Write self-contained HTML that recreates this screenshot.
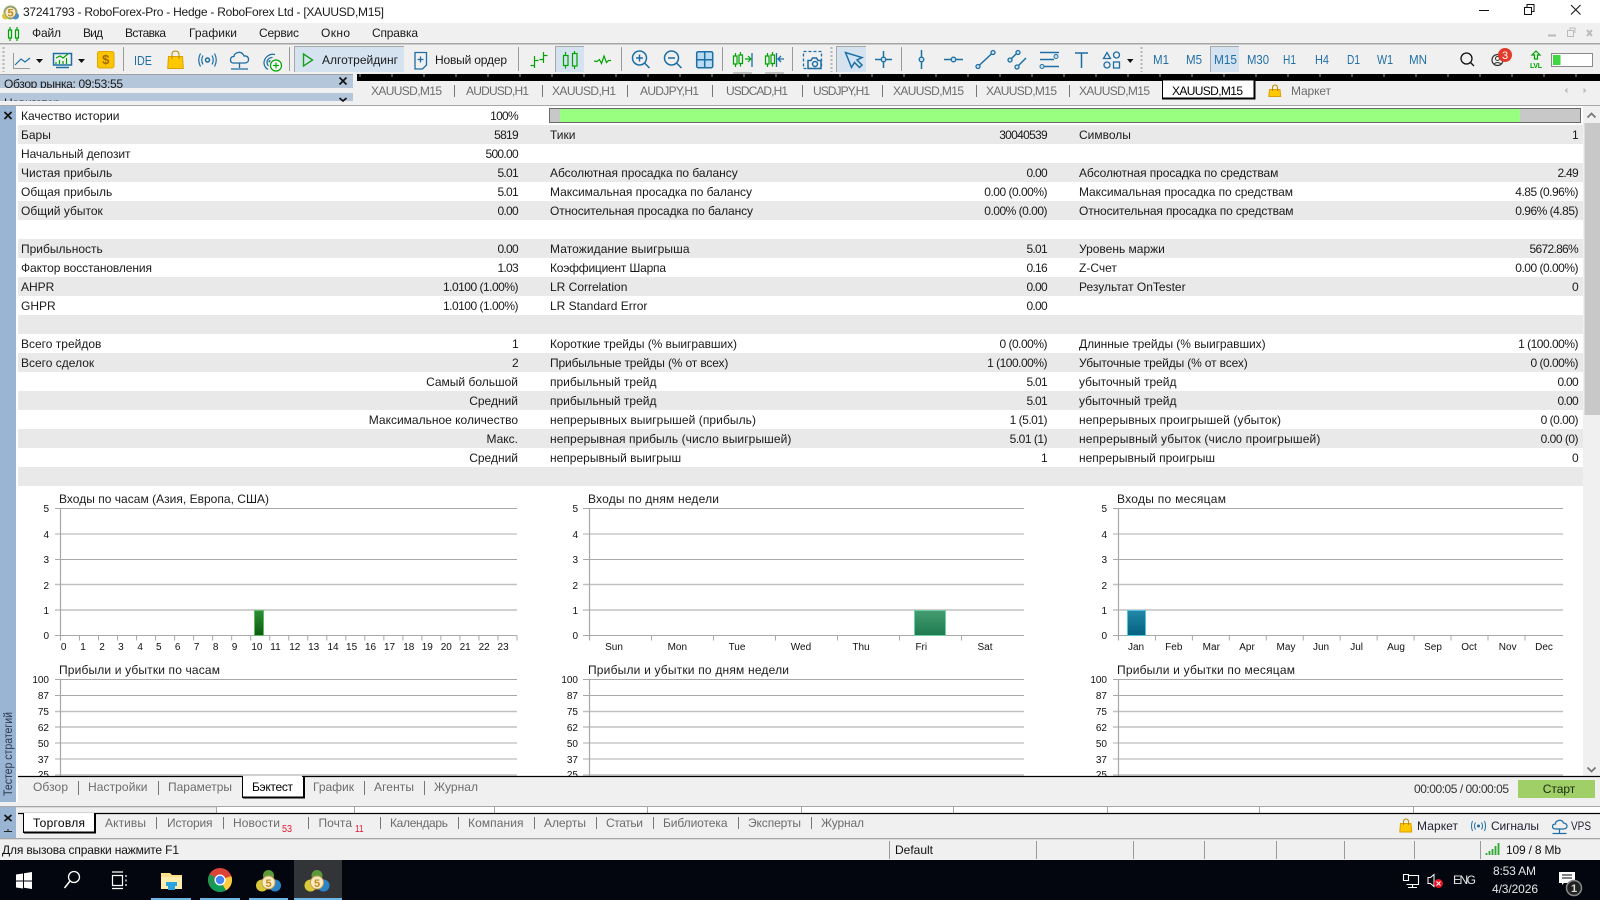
<!DOCTYPE html>
<html lang="ru"><head><meta charset="utf-8"><title>RoboForex</title>
<style>
html,body{margin:0;padding:0;width:1600px;height:900px;overflow:hidden;background:#f0f0f0}
svg{display:block;position:absolute;left:0;top:0}
text{font-family:"Liberation Sans","Noto Sans CJK SC",sans-serif;font-size:12px;fill:#1a1a1a}
.g text{fill:#6c6c6c}
.r text,text.r{text-anchor:end}
.v text{letter-spacing:-.7px}
.v text.p{letter-spacing:-.5px}
.b text{fill:#1f6fa8;font-size:13px}
.a text{font-size:10px;fill:#111}
.m text{text-anchor:middle}
.w text{fill:#e8e8e8}
.i{fill:none;stroke:#1c6ea4;stroke-width:1.5}
.n{fill:none;stroke:#00a400;stroke-width:1.2}
</style></head><body>
<svg width="1600" height="900" viewBox="0 0 1600 900" xmlns="http://www.w3.org/2000/svg">
<!-- backgrounds -->
<rect width="1600" height="23" fill="#fff"/>
<rect y="23" width="1600" height="837" fill="#f0f0f0"/>
<!-- title -->
<circle cx="10.5" cy="12.5" r="7" fill="#8fae6a"/>
<circle cx="5.5" cy="16" r="3.500" fill="#d8c83a"/><circle cx="15.500" cy="16" r="3.500" fill="#4a90c8"/>
<circle cx="10.5" cy="12.5" r="5.500" fill="#f6eccb" stroke="#8a8a60" stroke-width=".7"/>
<text x="10.5" y="16.500" text-anchor="middle" style="font-size:11px;fill:#c8891a;font-weight:bold">5</text>
<text x="23" y="16" textLength="361">37241793 - RoboForex-Pro - Hedge - RoboForex Ltd - [XAUUSD,M15]</text>
<path d="M1479 10.5H1489" stroke="#111" fill="none"/>
<path d="M1524.5 7.5h7v7h-7zM1527 7V4.500h7v7h-2.500" stroke="#111" fill="none"/>
<path d="M1571 5l9.500 9.500M1580.500 5l-9.500 9.500" stroke="#111" fill="none"/>
<!-- menu -->
<path class="n" d="M10 27v3M8.500 30h3v8h-3zM10 38v3M17 27v3M15.500 30h3v8h-3zM17 38v3"/>
<g>
<text x="32" y="37" textLength="29">Файл</text>
<text x="83" y="37" textLength="20">Вид</text>
<text x="125" y="37" textLength="41">Вставка</text>
<text x="189" y="37" textLength="48">Графики</text>
<text x="259" y="37" textLength="40">Сервис</text>
<text x="321" y="37" textLength="29">Окно</text>
<text x="372" y="37" textLength="46">Справка</text>
</g>
<path d="M1548 35.500h8" stroke="#bbb" stroke-width="2"/>
<path d="M1567.500 30.500h6v6h-6zM1570 30v-2h5v5" stroke="#bbb" fill="none"/>
<path d="M1587 30l5 6M1592 30l-5 6" stroke="#bbb" stroke-width="2"/>
<!-- toolbar -->
<rect y="43" width="1600" height="1.500" fill="#a6a6a6"/>
<path d="M3.500 47V72M831.500 47V72M1141.500 47V72" stroke="#b5b5b5" stroke-dasharray="2 2" stroke-width="2" fill="none"/>
<path d="M123.500 47V71M289.500 47V71M518.500 47V71M621.500 47V71M722.500 47V71M792.500 47V71M901.500 47V71" stroke="#9a9a9a" fill="none"/>
<!-- highlighted buttons -->
<g fill="#d5e3f1"><rect x="294" y="46" width="110" height="26"/><rect x="555" y="46" width="29" height="26"/><rect x="836" y="46" width="30" height="26"/><rect x="1210" y="46" width="29" height="26"/></g>
<path d="M294.500 72V46.500H404M555.500 72V46.500H584M836.500 72V46.500H866M1210.500 72V46.500H1239" stroke="#a8a8a8" fill="none"/>
<!-- line chart -->
<path d="M13.500 53V68.500H30" stroke="#999" fill="none"/>
<path class="i" style="stroke-width:1.200" d="M15 65l6-6 4 3 5-4"/>
<path d="M36 59h7l-3.500 4zM78 59h7l-3.500 4zM1127 59h6.500l-3.250 4z" fill="#111"/>
<!-- monitor -->
<path class="i" d="M53.500 53.500h18v11.500h-18zM56 67.500h13"/>
<path class="n" d="M56 62v2M59.500 60v4M63 61v3M66.500 58v6M56 58l4-2 3 2 5-4"/>
<!-- dollar -->
<rect x="97.500" y="51.500" width="16.500" height="16.500" rx="2" fill="#fdc400" stroke="#e0a800"/>
<text x="105.700" y="64" text-anchor="middle" style="font-size:13px;fill:#a06a00;font-weight:bold">$</text>
<!-- IDE -->
<text x="134" y="65" style="font-size:13px;fill:#1f6fa8" textLength="18" lengthAdjust="spacingAndGlyphs">IDE</text>
<!-- bag -->
<path d="M168.500 56.500h14l.8 12h-15.600z" fill="#ffc800" stroke="#d8a000"/>
<path d="M172 59v-4.500q0-3.500 3.500-3.500t3.500 3.500V59" fill="none" stroke="#b88a00"/>
<!-- signals -->
<circle cx="207.500" cy="60" r="2" fill="none" stroke="#1c6ea4" stroke-width="1.500"/>
<path class="i" style="stroke-width:1.200" d="M203 55.500q-2.500 4.500 0 9M212 55.500q2.500 4.500 0 9M200.500 53.500q-3.500 6.500 0 13M214.500 53.500q3.500 6.500 0 13"/>
<!-- cloud -->
<path class="i" style="stroke-width:1.300" d="M235 63h10q4-.5 3.500-4t-4.500-3q-2-4.500-6-3.500t-4 4q-3.500 0-3.500 3.500t4.500 3zM239.500 63v5M231 69h17"/>
<!-- globe plus -->
<path class="i" style="stroke-width:1.200" d="M275 54.500a9 9 0 0 0-11 9q.500 4 4 6M272.500 57.500a5 5 0 0 0-5.500 5q0 2 1.500 3.500M270.500 60.500a2 2 0 0 0-1.500 2"/>
<circle cx="276" cy="65.500" r="5.500" fill="#fff" stroke="#00a400" stroke-width="1.200"/>
<path d="M276 62.500v6M273 65.500h6" stroke="#00a400" stroke-width="1.200"/>
<!-- algo -->
<path d="M303.500 54l9 6-9 6z" fill="none" stroke="#18a018" stroke-width="1.400"/>
<text x="322" y="64" textLength="76">Алготрейдинг</text>
<!-- new order -->
<path class="i" style="stroke-width:1.300" d="M415 52.500h11.500v12.500l-4 4H415zM420.500 56.500v6M417.500 59.500h6"/>
<text x="435" y="64" textLength="72">Новый ордер</text>
<path class="n" d="M534.500 56v12M530.500 65.500h4M534.500 60.500h4M543.500 52v11M539.500 59.500h4M543.500 55.500h4"/>
<path class="n" d="M565.500 52v3M563.500 55.500h4.500v10h-4.500zM565.500 65.500v3M574.500 51v2.500M572.500 53.500h4.500v12.500h-4.500zM574.500 66v3"/>
<path class="n" d="M594 61l3 .5 2.500-2 2 4 2.500-7.500 2.500 6.500 2-2h2.500"/>
<!-- zoom -->
<circle cx="639.500" cy="58" r="7" class="i"/><path class="i" d="M644.500 63l5 5M636 58h7M639.500 54.500v7"/>
<circle cx="671.500" cy="58" r="7" class="i"/><path class="i" d="M676.500 63l5 5M668 58h7"/>
<!-- grid -->
<rect x="696.700" y="51.700" width="16" height="16" rx="1.500" fill="#b8dcf5" stroke="#1c6ea4" stroke-width="1.500"/>
<path class="i" d="M704.700 52v16M697 59.700h16"/>
<!-- shift -->
<path class="n" d="M735.500 53v3M733.500 56h3.500v8h-3.500zM735.500 64v3M740.500 52v3M739 55h3.500v8.500H739zM740.500 63.500v3M745 59h6M748 56l3 3-3 3"/>
<path class="i" style="stroke-width:1.300" d="M752 53v14"/>
<path d="M733 73h19M765 73h19" stroke="#999"/>
<path class="n" d="M767.500 53v3M765.500 56h3.500v8h-3.500zM767.500 64v3M772.500 52v3M771 55h3.500v8.500H771zM772.500 63.500v3"/>
<path class="i" style="stroke-width:1.300" d="M776.500 53v14M778 59h6M781 56l-3 3 3 3"/>
<!-- camera -->
<path d="M803.500 51.500h18v17h-18z" fill="none" stroke="#1c6ea4" stroke-width="1.300" stroke-dasharray="3 2"/>
<path class="i" d="M808 60.500h3l1.500-2.500h4l1.500 2.500h3v8h-13z"/><circle cx="815" cy="64" r="2.500" class="i"/>
<!-- cursor -->
<path d="M845.500 52.500l6 15 3-5 5 5 2.500-2.500-5-5 5-2.500z" fill="#cfe4f5" stroke="#1c6ea4" stroke-width="1.500"/>
<!-- tools -->
<path class="i" d="M875 59.500h17M883.500 51v17"/><circle cx="883.500" cy="59.500" r="2.300" fill="#cfe4f5" stroke="#1c6ea4" stroke-width="1.300"/>
<path class="i" d="M921.500 50v19"/><circle cx="921.500" cy="59.500" r="2.300" fill="#cfe4f5" stroke="#1c6ea4" stroke-width="1.300"/>
<path class="i" d="M944 59.500h19"/><circle cx="953.500" cy="59.500" r="2.300" fill="#cfe4f5" stroke="#1c6ea4" stroke-width="1.300"/>
<path class="i" d="M978 66.500L993 52.500"/><circle cx="978" cy="66.500" r="2" fill="#cfe4f5" stroke="#1c6ea4" stroke-width="1.300"/><circle cx="993" cy="52.500" r="2" fill="#cfe4f5" stroke="#1c6ea4" stroke-width="1.300"/>
<path class="i" d="M1009 61l9-9M1017 67l9-9"/><circle cx="1010" cy="60" r="2" fill="#cfe4f5" stroke="#1c6ea4" stroke-width="1.300"/><circle cx="1018" cy="52.500" r="2" fill="#cfe4f5" stroke="#1c6ea4" stroke-width="1.300"/><circle cx="1017" cy="67" r="2" fill="#cfe4f5" stroke="#1c6ea4" stroke-width="1.300"/>
<path class="i" d="M1040 52.500h19M1040 59.500h14M1040 66.500h19"/><circle cx="1056" cy="56.500" r="2" fill="#cfe4f5" stroke="#1c6ea4"/><circle cx="1042" cy="66.500" r="2" fill="#cfe4f5" stroke="#1c6ea4"/>
<path class="i" d="M1075 53h13M1081.500 53v15"/>
<path class="i" d="M1103.500 58.500l3.500-6 3.500 6z" style="stroke-width:1.300"/>
<circle cx="1116.500" cy="55" r="3" class="i" style="stroke-width:1.300"/><circle cx="1107" cy="65" r="3" class="i" style="stroke-width:1.300"/><rect x="1113.500" y="62" width="6" height="6" class="i" style="stroke-width:1.300"/>
<!-- periods -->
<g class="b">
<text x="1153" y="64" textLength="16" lengthAdjust="spacingAndGlyphs">M1</text>
<text x="1186" y="64" textLength="16" lengthAdjust="spacingAndGlyphs">M5</text>
<text x="1214" y="64" textLength="23" lengthAdjust="spacingAndGlyphs">M15</text>
<text x="1247" y="64" textLength="22" lengthAdjust="spacingAndGlyphs">M30</text>
<text x="1283" y="64" textLength="13" lengthAdjust="spacingAndGlyphs">H1</text>
<text x="1315" y="64" textLength="14" lengthAdjust="spacingAndGlyphs">H4</text>
<text x="1347" y="64" textLength="13" lengthAdjust="spacingAndGlyphs">D1</text>
<text x="1377" y="64" textLength="16" lengthAdjust="spacingAndGlyphs">W1</text>
<text x="1409" y="64" textLength="18" lengthAdjust="spacingAndGlyphs">MN</text>
</g>
<circle cx="1466.500" cy="58.500" r="5.500" fill="none" stroke="#111" stroke-width="1.300"/><path d="M1470.500 62.500l3.500 3.500" stroke="#111" stroke-width="1.300"/>
<circle cx="1497.500" cy="60" r="5.500" fill="none" stroke="#333" stroke-width="1.200"/><circle cx="1497.500" cy="58.500" r="2" fill="none" stroke="#333"/><path d="M1494 64q3.500-3 7 0" fill="none" stroke="#333"/>
<circle cx="1505" cy="55" r="7" fill="#e23a2a"/>
<text x="1505" y="59" text-anchor="middle" style="font-size:11px;fill:#fff">3</text>
<path d="M1536 51l4 4h-2.500v4h-3v-4H1532z" fill="none" stroke="#00a400" stroke-width="1.200"/>
<text x="1530" y="68" textLength="12" style="font-size:7px;fill:#00a400;font-weight:bold">LVL</text>
<rect x="1551.500" y="53.500" width="41" height="13" fill="#fff" stroke="#8a8a8a"/>
<rect x="1553" y="55" width="7.500" height="10" fill="#3fd83f"/>
<!-- black strip and left panel -->
<rect x="357" y="74" width="1243" height="7" fill="#000"/>
<path d="M359.500 75.500H1600" stroke="#999" stroke-width="3" stroke-dasharray="1 31"/>
<rect y="74" width="353" height="1" fill="#a0a0a0"/>
<rect y="75" width="353" height="13" fill="#b4c6da"/>
<text x="4" y="88" textLength="119">Обзор рынка: 09:53:55</text>
<rect y="88" width="353" height="5" fill="#f0f0f0"/>
<rect y="93" width="353" height="9" fill="#b4c6da"/>
<text x="4" y="107" textLength="56">Навигатор</text>
<rect y="101" width="353" height="4" fill="#f0f0f0"/>
<path d="M339.500 77.500l7 7M346.500 77.500l-7 7" stroke="#111" stroke-width="1.700"/>
<path d="M339.500 98l3.500 3 3.500-3" stroke="#111" stroke-width="1.700" fill="none"/>
<!-- chart tabs -->
<g class="g" style="font-size:12px">
<text x="371" y="95" textLength="71">XAUUSD,M15</text>
<text x="466" y="95" textLength="63">AUDUSD,H1</text>
<text x="552" y="95" textLength="64">XAUUSD,H1</text>
<text x="640" y="95" textLength="59">AUDJPY,H1</text>
<text x="726" y="95" textLength="62">USDCAD,H1</text>
<text x="813" y="95" textLength="57">USDJPY,H1</text>
<text x="893" y="95" textLength="71">XAUUSD,M15</text>
<text x="986" y="95" textLength="71">XAUUSD,M15</text>
<text x="1079" y="95" textLength="71">XAUUSD,M15</text>
<text x="1291" y="95" textLength="40">Маркет</text>
</g>
<path d="M454.500 85V97M542.500 85V97M627.500 85V97M712.500 85V97M802.500 85V97M882.500 85V97M976.500 85V97M1069.500 85V97" stroke="#777" fill="none"/>
<rect x="1162.500" y="80" width="91.500" height="18" fill="#fff" stroke="#000"/>
<path d="M1162 98.500H1254.500V80" stroke="#000" fill="none" stroke-width="2"/>
<text x="1172" y="95" textLength="71" style="fill:#000">XAUUSD,M15</text>
<path d="M1269.500 89.500h10.500l.7 7h-11.900z" fill="#ffc800" stroke="#d8a000"/>
<path d="M1272.500 91v-3q0-3 2.500-3t2.500 3v3" fill="none" stroke="#b88a00"/>
<path d="M1567.500 87.500v6l-3-3zM1583.500 87.500v6l3-3z" fill="#c0c0c0"/>
<rect y="105" width="1600" height="1.300" fill="#a6a6a6"/>
<!-- tester strip -->
<rect x="0" y="106" width="18" height="696" fill="#fff"/>
<rect x="0" y="106" width="16" height="696" fill="#9ab5d4"/>
<path d="M4.500 112l7 7M11.500 112l-7 7" stroke="#111" stroke-width="1.700"/>
<text transform="translate(12,796) rotate(-90)" textLength="84" lengthAdjust="spacingAndGlyphs" style="fill:#2a3a4a">Тестер стратегий</text>
<!-- content -->
<rect x="18" y="106" width="1565" height="671" fill="#fff"/>
<g fill="#e9e9e9">
<rect x="18" y="125" width="1565" height="19"/><rect x="18" y="163" width="1565" height="19"/><rect x="18" y="201" width="1565" height="19"/><rect x="18" y="239" width="1565" height="19"/><rect x="18" y="277" width="1565" height="19"/><rect x="18" y="315" width="1565" height="19"/><rect x="18" y="353" width="1565" height="19"/><rect x="18" y="391" width="1565" height="19"/><rect x="18" y="429" width="1565" height="19"/><rect x="18" y="467" width="1565" height="19"/>
</g>
<!-- scrollbar -->
<rect x="1583" y="106" width="17" height="671" fill="#f0f0f0"/>
<rect x="1584.500" y="123" width="15.500" height="292" fill="#c8c8c8"/>
<path d="M1587.500 117.500l4-4 4 4M1587.500 767.500l4 4 4-4" fill="none" stroke="#777" stroke-width="1.800"/>
<!-- progress -->
<rect x="549.500" y="108.500" width="1031" height="14" fill="#c8c8c8" stroke="#6a6a6a"/>
<rect x="560" y="109" width="960" height="13" fill="#99ff80"/>
<!-- col 1 -->
<g>
<text x="21" y="120" textLength="98.500">Качество истории</text>
<text x="21" y="139">Бары</text>
<text x="21" y="158" textLength="109.500">Начальный депозит</text>
<text x="21" y="177">Чистая прибыль</text>
<text x="21" y="196">Общая прибыль</text>
<text x="21" y="215">Общий убыток</text>
<text x="21" y="253">Прибыльность</text>
<text x="21" y="272" textLength="131">Фактор восстановления</text>
<text x="21" y="291">AHPR</text>
<text x="21" y="310">GHPR</text>
<text x="21" y="348">Всего трейдов</text>
<text x="21" y="367">Всего сделок</text>
</g>
<g class="r v">
<text x="518" y="120">100%</text>
<text x="518" y="139">5819</text>
<text x="518" y="158">500.00</text>
<text x="518" y="177">5.01</text>
<text x="518" y="196">5.01</text>
<text x="518" y="215">0.00</text>
<text x="518" y="253">0.00</text>
<text x="518" y="272">1.03</text>
<text class="p" x="518" y="291">1.0100 (1.00%)</text>
<text class="p" x="518" y="310">1.0100 (1.00%)</text>
<text x="518" y="348">1</text>
<text x="518" y="367">2</text>
</g>
<g class="r">
<text x="518" y="386">Самый большой</text>
<text x="518" y="405">Средний</text>
<text x="518" y="424">Максимальное количество</text>
<text x="518" y="443">Макс.</text>
<text x="518" y="462">Средний</text>
</g>
<!-- col 2 -->
<g>
<text x="550" y="139">Тики</text>
<text x="550" y="177" textLength="187.700">Абсолютная просадка по балансу</text>
<text x="550" y="196" textLength="202">Максимальная просадка по балансу</text>
<text x="550" y="215" textLength="203">Относительная просадка по балансу</text>
<text x="550" y="253" textLength="139.500">Матожидание выигрыша</text>
<text x="550" y="272" textLength="116">Коэффициент Шарпа</text>
<text x="550" y="291">LR Correlation</text>
<text x="550" y="310">LR Standard Error</text>
<text x="550" y="348" textLength="187">Короткие трейды (% выигравших)</text>
<text x="550" y="367" textLength="178.400">Прибыльные трейды (% от всех)</text>
<text x="550" y="386">прибыльный трейд</text>
<text x="550" y="405">прибыльный трейд</text>
<text x="550" y="424" textLength="206">непрерывных выигрышей (прибыль)</text>
<text x="550" y="443" textLength="241.400">непрерывная прибыль (число выигрышей)</text>
<text x="550" y="462">непрерывный выигрыш</text>
</g>
<g class="r v">
<text x="1047" y="139">30040539</text>
<text x="1047" y="177">0.00</text>
<text class="p" x="1047" y="196">0.00 (0.00%)</text>
<text class="p" x="1047" y="215">0.00% (0.00)</text>
<text x="1047" y="253">5.01</text>
<text x="1047" y="272">0.16</text>
<text x="1047" y="291">0.00</text>
<text x="1047" y="310">0.00</text>
<text class="p" x="1047" y="348">0 (0.00%)</text>
<text class="p" x="1047" y="367">1 (100.00%)</text>
<text x="1047" y="386">5.01</text>
<text x="1047" y="405">5.01</text>
<text class="p" x="1047" y="424">1 (5.01)</text>
<text class="p" x="1047" y="443">5.01 (1)</text>
<text x="1047" y="462">1</text>
</g>
<!-- col 3 -->
<g>
<text x="1079" y="139">Символы</text>
<text x="1079" y="177" textLength="199.400">Абсолютная просадка по средствам</text>
<text x="1079" y="196" textLength="214">Максимальная просадка по средствам</text>
<text x="1079" y="215" textLength="214.500">Относительная просадка по средствам</text>
<text x="1079" y="253">Уровень маржи</text>
<text x="1079" y="272">Z-Счет</text>
<text x="1079" y="291">Результат OnTester</text>
<text x="1079" y="348" textLength="186.600">Длинные трейды (% выигравших)</text>
<text x="1079" y="367" textLength="168.700">Убыточные трейды (% от всех)</text>
<text x="1079" y="386">убыточный трейд</text>
<text x="1079" y="405">убыточный трейд</text>
<text x="1079" y="424" textLength="202">непрерывных проигрышей (убыток)</text>
<text x="1079" y="443" textLength="241.400">непрерывный убыток (число проигрышей)</text>
<text x="1079" y="462">непрерывный проигрыш</text>
</g>
<g class="r v">
<text x="1578" y="139">1</text>
<text x="1578" y="177">2.49</text>
<text class="p" x="1578" y="196">4.85 (0.96%)</text>
<text class="p" x="1578" y="215">0.96% (4.85)</text>
<text x="1578" y="253">5672.86%</text>
<text class="p" x="1578" y="272">0.00 (0.00%)</text>
<text x="1578" y="291">0</text>
<text class="p" x="1578" y="348">1 (100.00%)</text>
<text class="p" x="1578" y="367">0 (0.00%)</text>
<text x="1578" y="386">0.00</text>
<text x="1578" y="405">0.00</text>
<text class="p" x="1578" y="424">0 (0.00)</text>
<text class="p" x="1578" y="443">0.00 (0)</text>
<text x="1578" y="462">0</text>
</g>
<!-- chart grid lines -->
<g fill="none">
<path stroke="#a8a8a8" d="M55 508.500H517M55 559.500H517M55 635.500H517M55 679.500H517M55 695.500H517M583 508.500H1024M583 559.500H1024M583 635.500H1024M583 679.500H1024M583 695.500H1024M1113 508.500H1563M1113 559.500H1563M1113 635.500H1563M1113 679.500H1563M1113 695.500H1563"/>
<path stroke="#d6d6d6" stroke-width="2" d="M55 534H517M55 743H517M55 759H517M583 534H1024M583 743H1024M583 759H1024M1113 534H1563M1113 743H1563M1113 759H1563"/>
<path stroke="#c0c0c0" stroke-width="1.500" d="M55 584.500H517M55 610H517M55 711.500H517M55 727H517M55 775H517M583 584.500H1024M583 610H1024M583 711.500H1024M583 727H1024M583 775H1024M1113 584.500H1563M1113 610H1563M1113 711.500H1563M1113 727H1563M1113 775H1563"/>
<path stroke="#a8a8a8" stroke-width="1.200" d="M60.500 508V640M60.500 679V777M589.500 508V640M589.500 679V777M1118.500 508V640M1118.500 679V777"/>
<path stroke="#a8a8a8" stroke-width="5" stroke-dasharray="1 18.020" d="M60 638H518"/>
<path stroke="#a8a8a8" stroke-width="5" stroke-dasharray="1 61" d="M589 638H965"/>
<path stroke="#a8a8a8" stroke-width="5" stroke-dasharray="1 35.950" d="M1118 638H1530"/>
</g>
<!-- bars -->
<defs>
<linearGradient id="b1" x1="0" y1="0" x2="0" y2="1"><stop offset="0" stop-color="#2f8f34"/><stop offset="1" stop-color="#0a5c10"/></linearGradient>
<linearGradient id="b2" x1="0" y1="0" x2="0" y2="1"><stop offset="0" stop-color="#459c70"/><stop offset="1" stop-color="#1f7a50"/></linearGradient>
<linearGradient id="b3" x1="0" y1="0" x2="0" y2="1"><stop offset="0" stop-color="#2388a8"/><stop offset="1" stop-color="#04607f"/></linearGradient>
</defs>
<rect x="254.500" y="610.500" width="9" height="25" fill="url(#b1)" stroke="#62bb62"/>
<rect x="914.500" y="610.500" width="31" height="25" fill="url(#b2)" stroke="#72cfa2"/>
<rect x="1127.500" y="610.500" width="18" height="25" fill="url(#b3)" stroke="#55c2e2"/>
<!-- chart titles -->
<g>
<text x="59" y="503" textLength="210">Входы по часам (Азия, Европа, США)</text>
<text x="588" y="503" textLength="131">Входы по дням недели</text>
<text x="1117" y="503" textLength="109">Входы по месяцам</text>
<text x="59" y="674" textLength="161">Прибыли и убытки по часам</text>
<text x="588" y="674" textLength="201">Прибыли и убытки по дням недели</text>
<text x="1117" y="674" textLength="178">Прибыли и убытки по месяцам</text>
</g>
<!-- y labels -->
<g class="a r">
<text x="49" y="512">5</text><text x="49" y="538">4</text><text x="49" y="563">3</text><text x="49" y="589">2</text><text x="49" y="614">1</text><text x="49" y="639">0</text>
<text x="49" y="683">100</text><text x="49" y="699">87</text><text x="49" y="715">75</text><text x="49" y="731">62</text><text x="49" y="747">50</text><text x="49" y="763">37</text><text x="49" y="778">25</text>
<text x="578" y="512">5</text><text x="578" y="538">4</text><text x="578" y="563">3</text><text x="578" y="589">2</text><text x="578" y="614">1</text><text x="578" y="639">0</text>
<text x="578" y="683">100</text><text x="578" y="699">87</text><text x="578" y="715">75</text><text x="578" y="731">62</text><text x="578" y="747">50</text><text x="578" y="763">37</text><text x="578" y="778">25</text>
<text x="1107" y="512">5</text><text x="1107" y="538">4</text><text x="1107" y="563">3</text><text x="1107" y="589">2</text><text x="1107" y="614">1</text><text x="1107" y="639">0</text>
<text x="1107" y="683">100</text><text x="1107" y="699">87</text><text x="1107" y="715">75</text><text x="1107" y="731">62</text><text x="1107" y="747">50</text><text x="1107" y="763">37</text><text x="1107" y="778">25</text>
</g>
<!-- x labels -->
<g class="a m">
<text x="63.700" y="650">0</text><text x="83" y="650">1</text><text x="102" y="650">2</text><text x="120.900" y="650">3</text><text x="140.200" y="650">4</text><text x="158.800" y="650">5</text><text x="177.700" y="650">6</text><text x="196.600" y="650">7</text><text x="215.600" y="650">8</text><text x="234.500" y="650">9</text><text x="256.900" y="650">10</text><text x="275.500" y="650">11</text><text x="294.800" y="650">12</text><text x="313.700" y="650">13</text><text x="333" y="650">14</text><text x="351.600" y="650">15</text><text x="370.500" y="650">16</text><text x="389.500" y="650">17</text><text x="408.800" y="650">18</text><text x="427.300" y="650">19</text><text x="446.300" y="650">20</text><text x="465.200" y="650">21</text><text x="484.200" y="650">22</text><text x="503.100" y="650">23</text>
<text x="614" y="650">Sun</text><text x="677.300" y="650">Mon</text><text x="737" y="650">Tue</text><text x="801" y="650">Wed</text><text x="861" y="650">Thu</text><text x="921.300" y="650">Fri</text><text x="985" y="650">Sat</text>
<text x="1136" y="650">Jan</text><text x="1173.800" y="650">Feb</text><text x="1211.300" y="650">Mar</text><text x="1247" y="650">Apr</text><text x="1286" y="650">May</text><text x="1321" y="650">Jun</text><text x="1356.600" y="650">Jul</text><text x="1396" y="650">Aug</text><text x="1433" y="650">Sep</text><text x="1469" y="650">Oct</text><text x="1507.700" y="650">Nov</text><text x="1544" y="650">Dec</text>
</g>
<!-- tester tab bar -->
<rect x="18" y="777" width="1582" height="29" fill="#f0f0f0"/>
<path d="M18 776.500H243M302 776.500H1600" stroke="#000" stroke-width="1.200"/>
<rect x="242.500" y="777" width="61" height="20" fill="#fff"/>
<path d="M242.500 776.500V797.500H303.500V776.500" fill="none" stroke="#000"/>
<path d="M243 797.500H304V777" fill="none" stroke="#000" stroke-width="2"/>
<g class="g">
<text x="33" y="791" textLength="35">Обзор</text>
<text x="88" y="791" textLength="59.500">Настройки</text>
<text x="168" y="791" textLength="64">Параметры</text>
<text x="313" y="791" textLength="41">График</text>
<text x="374" y="791" textLength="40">Агенты</text>
<text x="434" y="791" textLength="44">Журнал</text>
</g>
<text x="252" y="791" textLength="41" style="fill:#000">Бэктест</text>
<path d="M78.500 781V795M158.500 781V795M364.500 781V795M424.500 781V795" stroke="#777" fill="none"/>
<text x="1414" y="793" textLength="95" style="fill:#333">00:00:05 / 00:00:05</text>
<rect x="1518" y="780" width="77" height="18" fill="#a0cf68"/>
<text x="1559" y="793" text-anchor="middle" style="fill:#1a2a10">Старт</text>
<!-- toolbox strip -->
<rect x="0" y="806" width="1600" height="1.300" fill="#a6a6a6"/>
<rect x="216" y="807" width="1384" height="6" fill="#fff"/>
<path d="M216.500 807V813M354.500 807V813M494.500 807V813M647.500 807V813M801.500 807V813M953.500 807V813M1107.500 807V813M1259.500 807V813M1413.500 807V813" stroke="#a6a6a6" fill="none"/>
<rect x="0" y="807" width="16" height="31" fill="#9ab5d4"/>
<path d="M4.500 815l7 6M11.500 815l-7 6" stroke="#111" stroke-width="1.700"/>
<path d="M4 831.500h8M8 829v2" stroke="#222" fill="none"/>
<path d="M18 813.500H1600" stroke="#000" stroke-width="1.200"/>
<rect x="23.500" y="813" width="71" height="19.500" fill="#fff"/>
<path d="M23.500 813V832.500H95V813" fill="none" stroke="#000"/>
<path d="M24 832.500H95V813" fill="none" stroke="#000" stroke-width="2"/>
<text x="33" y="827" textLength="52" style="fill:#000">Торговля</text>
<g class="g">
<text x="105" y="827" textLength="41">Активы</text>
<text x="167" y="827" textLength="45.500">История</text>
<text x="233" y="827" textLength="47">Новости</text>
<text x="318.500" y="827" textLength="33.500">Почта</text>
<text x="390" y="827" textLength="58">Календарь</text>
<text x="468" y="827" textLength="55.500">Компания</text>
<text x="544" y="827" textLength="42">Алерты</text>
<text x="606" y="827" textLength="37">Статьи</text>
<text x="663" y="827" textLength="64.500">Библиотека</text>
<text x="748" y="827" textLength="53">Эксперты</text>
<text x="821" y="827" textLength="43">Журнал</text>
</g>
<text x="282" y="832" textLength="10" lengthAdjust="spacingAndGlyphs" style="font-size:10px;fill:#f01030">53</text>
<text x="355" y="832" textLength="8.500" lengthAdjust="spacingAndGlyphs" style="font-size:10px;fill:#f01030">11</text>
<path d="M156.500 817V829M223.500 817V829M308.500 817V829M380.500 817V829M458.500 817V829M534.500 817V829M596.500 817V829M653.500 817V829M738.500 817V829M811.500 817V829" stroke="#777" fill="none"/>
<path d="M1400.500 823.500h10.500l.7 8.500h-11.900z" fill="#ffc800" stroke="#d8a000"/>
<path d="M1403.500 825v-3q0-3 2.500-3t2.500 3v3" fill="none" stroke="#b88a00"/>
<text x="1417" y="830" textLength="41" style="fill:#223">Маркет</text>
<circle cx="1478.500" cy="826" r="1.500" fill="#1c6ea4"/>
<path d="M1475.500 822.500q-2 3.500 0 7M1481.500 822.500q2 3.500 0 7M1472.500 821q-2 5 0 10M1484.500 821q2 5 0 10" fill="none" stroke="#1c6ea4"/>
<text x="1491" y="830" textLength="48" style="fill:#223">Сигналы</text>
<path class="i" style="stroke-width:1.200" d="M1556 829h8q3-.5 3-3t-3.500-3q-1.500-3.500-5-2.500t-3 3.500q-3 0-3 2.500t3.500 2.500zM1559.500 829v4M1552.500 833.500h14"/>
<text x="1571" y="830" textLength="20" lengthAdjust="spacingAndGlyphs" style="fill:#223">VPS</text>
<rect y="838" width="1600" height="1.300" fill="#a6a6a6"/>
<!-- status -->
<text x="2" y="854" textLength="177" style="fill:#111">Для вызова справки нажмите F1</text>
<text x="895" y="854" textLength="38" style="fill:#111">Default</text>
<path d="M889.500 841V859M1036.500 841V859M1133.500 841V859M1204.500 841V859M1276.500 841V859M1344.500 841V859M1414.500 841V859M1480.500 841V859" stroke="#9a9a9a" fill="none"/>
<path d="M1486.500 855v-2M1489.500 855v-4M1492.500 855v-6M1495.500 855v-9M1498.500 855v-12" stroke="#2fa82f" stroke-width="1.800" fill="none"/>
<text x="1506" y="854" textLength="55" style="fill:#111">109 / 8 Mb</text>
<!-- taskbar -->
<rect y="860" width="1600" height="40" fill="#03060e"/>
<rect x="294" y="860" width="48" height="40" fill="#333438"/>
<g fill="#6fb5e6"><rect x="151" y="898" width="40" height="2"/><rect x="200" y="898" width="40" height="2"/><rect x="249" y="898" width="39" height="2"/><rect x="294" y="898" width="48" height="2"/></g>
<path d="M16 874.500l7-1v7h-7zM24 873.300l8-1.300v8.500h-8zM16 881.500h7v7l-7-1zM24 881.500h8V889l-8-1.200z" fill="#fff"/>
<circle cx="74" cy="877" r="5.500" fill="none" stroke="#fff" stroke-width="1.300"/><path d="M70 881l-5.500 7" stroke="#fff" stroke-width="1.500"/>
<path d="M112.500 875.500h10v10h-10zM112 872h11M112 888.500h11M126 875v2M126 879.500v2M126 884v2" fill="none" stroke="#fff" stroke-width="1.200"/>
<path d="M161 873h9l2 2h10v14h-21z" fill="#ffe08a"/>
<rect x="161" y="877" width="21" height="12" fill="#ffedae"/>
<path d="M166 882h11v4h-2v4h-7v-4h-2z" fill="#2aa3e0"/>
<!-- chrome -->
<circle cx="220" cy="880" r="12" fill="#db4437"/>
<path d="M220 880L209.600 886A12 12 0 0 0 226 890.400z" fill="#0f9d58"/>
<path d="M220 880L231.300 876A12 12 0 0 1 226 890.400z" fill="#ffcd40"/>
<path d="M220 880L209.600 874A12 12 0 0 0 209.600 886z" fill="#0f9d58" opacity=".9"/>
<circle cx="220" cy="880" r="5.500" fill="#fff"/><circle cx="220" cy="880" r="4.200" fill="#4285f4"/>
<!-- mt5 icons -->
<circle cx="268.500" cy="875.500" r="5.500" fill="#5a9a3a"/>
<circle cx="262" cy="885.500" r="6" fill="#d8c83a"/>
<circle cx="275" cy="885.500" r="6" fill="#2a84c8"/>
<circle cx="268.500" cy="882.500" r="6.500" fill="#f8ecc8" stroke="#c9a24a"/>
<text x="268.500" y="887" text-anchor="middle" style="font-size:11px;font-weight:bold;fill:#c8891a">5</text>
<circle cx="317" cy="875.500" r="5.500" fill="#5a9a3a"/>
<circle cx="310.500" cy="885.500" r="6" fill="#d8c83a"/>
<circle cx="323.500" cy="885.500" r="6" fill="#2a84c8"/>
<circle cx="317" cy="882.500" r="6.500" fill="#f8ecc8" stroke="#c9a24a"/>
<text x="317" y="887" text-anchor="middle" style="font-size:11px;font-weight:bold;fill:#c8891a">5</text>
<!-- tray -->
<path d="M1403.500 874.500h5v6h-5zM1408.500 875.500h10v9h-12M1412.500 884.500v3M1408 887.500h9" fill="none" stroke="#fff" stroke-width="1.100"/>
<path d="M1428 877.500h2.500l3.500-3v12l-3.500-3H1428z" fill="none" stroke="#fff"/>
<circle cx="1438.500" cy="883.500" r="4.500" fill="#e81123"/><path d="M1436.500 881.500l4 4M1440.500 881.500l-4 4" stroke="#fff"/>
<g class="w">
<text x="1453" y="884" textLength="23" style="font-size:12px">ENG</text>
<text x="1493" y="875" textLength="43" style="font-size:12px">8:53 AM</text>
<text x="1492" y="893" textLength="46" style="font-size:12px">4/3/2026</text>
</g>
<path d="M1559 872h16v11h-11l-2 2v-2h-3z" fill="#fff"/>
<path d="M1562 875h10M1562 878h10" stroke="#03060e"/>
<circle cx="1574" cy="888" r="7.500" fill="#222" stroke="#888" stroke-width="1.500"/>
<text x="1574" y="892" text-anchor="middle" style="font-size:11px;fill:#ddd;font-weight:bold">1</text>
</svg>
</body></html>
